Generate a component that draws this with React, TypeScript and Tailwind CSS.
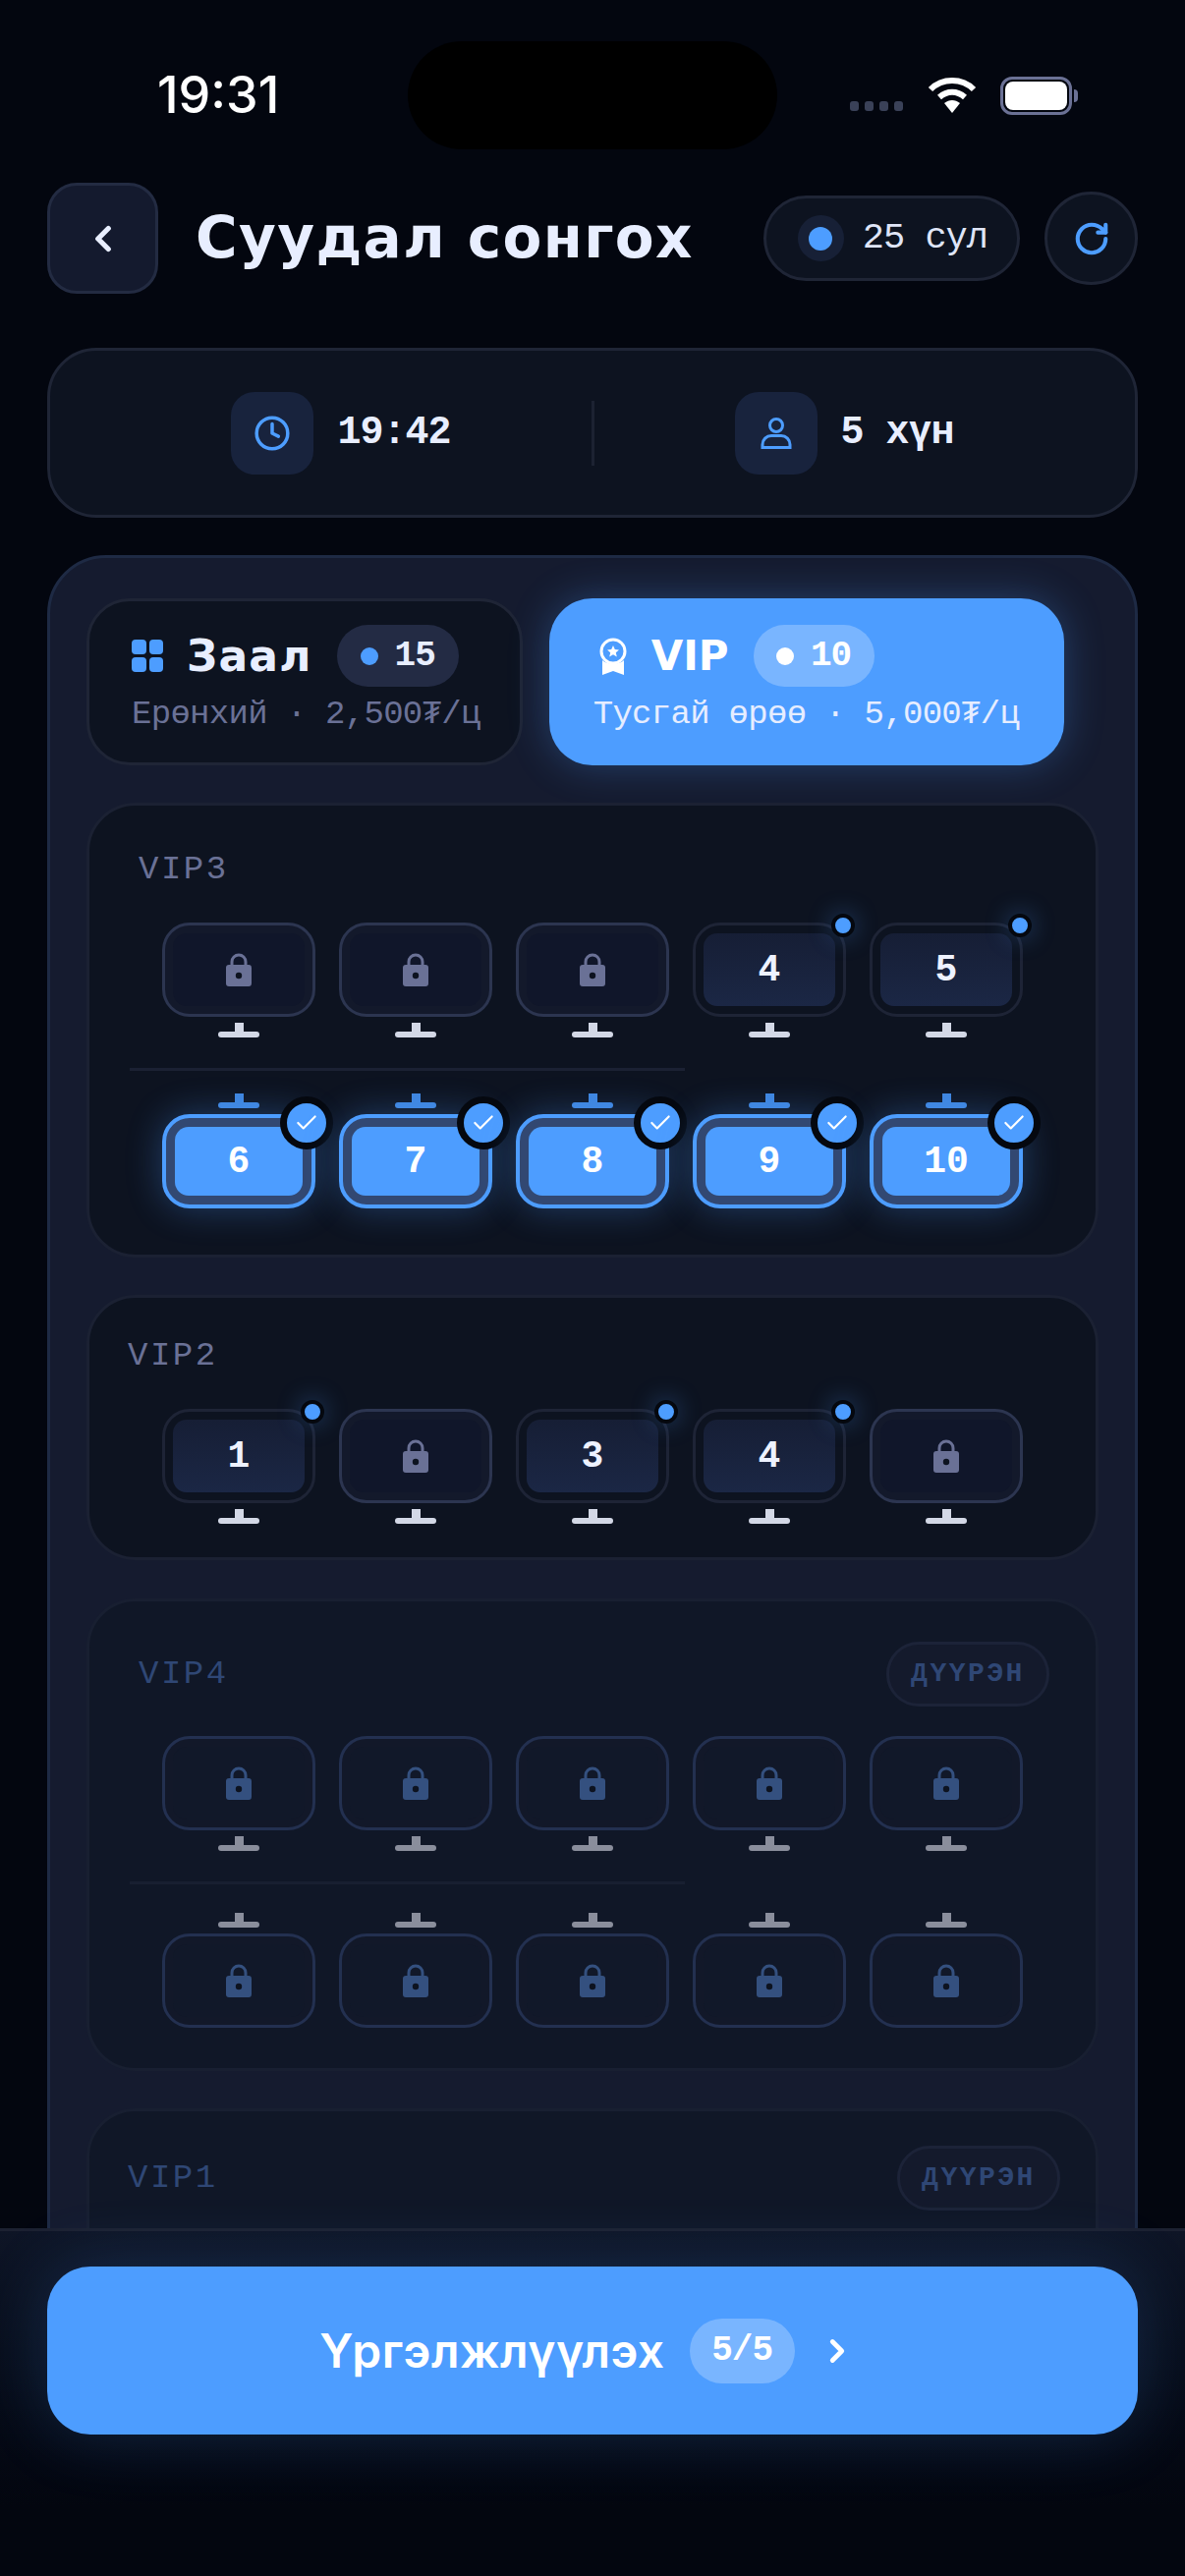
import { Check, ChevronLeft, ChevronRight, Clock, RotateCw } from 'lucide-react'

type SeatState = 'locked' | 'free' | 'selected'
type SeatData = { n: number; state: SeatState }

const mono = "font-['Liberation_Mono',monospace]"
const wide = "font-['DejaVu_Sans',sans-serif]"

const locked = (count: number): SeatData[] =>
  Array.from({ length: count }, (_, i) => ({ n: i + 1, state: 'locked' as SeatState }))

function LockIcon({ color }: { color: string }) {
  return (
    <svg width="26" height="34" viewBox="0 0 26 34" fill="none">
      <path d="M6 15V9a7 7 0 0 1 14 0v6" stroke={color} strokeWidth="3" />
      <rect x="0" y="12" width="26" height="22" rx="3" fill={color} />
      <circle cx="13" cy="23" r="3.2" fill="#0d1320" />
    </svg>
  )
}

function Stand({ up, selected, dim }: { up?: boolean; selected?: boolean; dim?: boolean }) {
  const color = selected ? 'bg-[#3f86df]' : dim ? 'bg-[#8a8e9c]' : 'bg-[#d3d8e6]'
  return (
    <div className={`flex flex-col items-center ${up ? 'mb-[6px]' : 'mt-[6px]'}`}>
      <div className={`w-[9px] h-[9px] ${color}`} />
      <div className={`w-[42px] h-[6px] rounded-full ${color}`} />
    </div>
  )
}

function Seat({ seat, up, dim }: { seat: SeatData; up?: boolean; dim?: boolean }) {
  const { n, state } = seat
  const shell =
    state === 'selected'
      ? 'border-[4px] border-[#4d9dff] bg-[#324872] p-[9px] shadow-[0_0_36px_rgba(77,157,255,0.32)]'
      : state === 'free'
        ? 'border-[3px] border-[#1e2436] p-[8px]'
        : dim
          ? 'border-[3px] border-[#233050] bg-[#121829] p-[8px]'
          : 'border-[3px] border-[#2c3550] bg-[#13192b] p-[8px]'
  const inner =
    state === 'selected'
      ? 'bg-[#4d9dff] text-white'
      : state === 'free'
        ? 'bg-gradient-to-b from-[#161e35] to-[#1b2745] text-[#eef2ff]'
        : dim
          ? 'bg-[#111829]'
          : 'bg-[#10162a]'

  return (
    <div className="w-[156px] flex flex-col">
      {up && <Stand up selected={state === 'selected'} dim={dim} />}
      <div className={`relative h-[96px] rounded-[28px] ${shell}`}>
        <div className={`h-full rounded-[14px] flex items-center justify-center ${inner}`}>
          {state === 'locked' ? (
            <LockIcon color={dim ? '#34507f' : '#6a7196'} />
          ) : (
            <span className={`${mono} text-[38px] font-bold`}>{n}</span>
          )}
        </div>
        {state === 'selected' && (
          <div className="absolute -top-[22px] -right-[22px] w-[54px] h-[54px] rounded-full bg-[#4d9dff] border-[7px] border-[#05080f] flex items-center justify-center">
            <Check size={26} strokeWidth={2} color="#ffffff" />
          </div>
        )}
        {state === 'free' && (
          <div className="absolute -top-[12px] -right-[12px] w-[24px] h-[24px] rounded-full bg-[#4d9dff] border-[4px] border-[#05080f] shadow-[0_0_24px_rgba(77,157,255,0.35)]" />
        )}
      </div>
      {!up && <Stand dim={dim} />}
    </div>
  )
}

function SeatRow({ seats, up, dim }: { seats: SeatData[]; up?: boolean; dim?: boolean }) {
  return (
    <div className="flex justify-center gap-[24px]">
      {seats.map((s) => (
        <Seat key={s.n} seat={s} up={up} dim={dim} />
      ))}
    </div>
  )
}

function FullBadge() {
  return (
    <div
      className={`h-[66px] w-[166px] rounded-full border-[3px] border-[#1c2338] bg-[#141a2c] flex items-center justify-center ${mono} text-[28px] font-bold tracking-[2.5px] text-[#2f4775]`}
    >
      ДҮҮРЭН
    </div>
  )
}

export default function App() {
  return (
    <div className="w-[1206px] h-[2622px] overflow-hidden flex flex-col bg-[#03060f] font-['Inter',sans-serif] text-[#e8eeff]">
      {/* status bar */}
      <div className="flex items-center h-[110px] mt-[42px] pl-[160px] shrink-0">
        <span className="w-[255px] text-[52px] font-medium text-white">19:31</span>
        <div className="w-[376px] h-[110px] rounded-full bg-black" />
        <div className="ml-[74px] flex items-center">
          <div className="flex gap-[6px] mt-[22px]">
            <div className="w-[9px] h-[10px] rounded-[3px] bg-[#3a4158]" />
            <div className="w-[9px] h-[10px] rounded-[3px] bg-[#3a4158]" />
            <div className="w-[9px] h-[10px] rounded-[3px] bg-[#3a4158]" />
            <div className="w-[9px] h-[10px] rounded-[3px] bg-[#3a4158]" />
          </div>
          <svg className="ml-[25px]" width="50" height="38" viewBox="0 0 50 38" fill="none">
            <path d="M3 13C15 1 35 1 47 13" stroke="#fff" strokeWidth="6" />
            <path d="M12 21c8-7 18-7 26 0" stroke="#fff" strokeWidth="6" />
            <path d="M17 27c5-4 11-4 16 0l-8 10z" fill="#fff" />
          </svg>
          <div className="ml-[24px] w-[73px] h-[39px] rounded-[12px] border-[3px] border-[#6b7195] p-[2px] relative">
            <div className="h-full rounded-[8px] bg-white" />
            <div className="absolute -right-[9px] top-[10px] w-[4px] h-[13px] rounded-r-full bg-[#6b7195]" />
          </div>
        </div>
      </div>

      {/* header */}
      <div className="flex items-center h-[113px] mt-[34px] px-[48px] shrink-0">
        <button className="w-[113px] h-[113px] rounded-[30px] bg-[#141a2e] border-[3px] border-[#232b42] flex items-center justify-center">
          <ChevronLeft size={42} strokeWidth={3} color="#e8eeff" />
        </button>
        <h1 className={`ml-[38px] ${wide} text-[58px] font-bold tracking-[1.4px]`}>Суудал сонгох</h1>
        <div className="ml-auto flex items-center gap-[25px]">
          <div className="h-[87px] rounded-full bg-[#0d1320] border-[3px] border-[#1f2536] pl-[32px] pr-[30px] flex items-center gap-[19px]">
            <div className="w-[47px] h-[47px] rounded-full bg-[#172036] flex items-center justify-center">
              <div className="w-[24px] h-[24px] rounded-full bg-[#4d9dff]" />
            </div>
            <span className={`${mono} text-[37px] tracking-[-1px] text-[#dfe5f7]`}>25 сул</span>
          </div>
          <button className="w-[95px] h-[95px] rounded-full bg-[#0d1320] border-[3px] border-[#1f2536] flex items-center justify-center">
            <RotateCw size={38} strokeWidth={2.6} color="#4d9dff" />
          </button>
        </div>
      </div>

      {/* time and people */}
      <div className="mt-[55px] mx-[48px] h-[173px] rounded-[50px] bg-[#0d1320] border-[3px] border-[#1f2536] flex items-center justify-center gap-[143px] shrink-0">
        <div className="flex items-center gap-[24px]">
          <div className="w-[84px] h-[84px] rounded-[24px] bg-[#18233d] flex items-center justify-center">
            <Clock size={38} strokeWidth={2.2} color="#4d9dff" />
          </div>
          <span className={`${mono} text-[40px] tracking-[-1px] font-bold`}>19:42</span>
        </div>
        <div className="w-[3px] h-[66px] bg-[#1c2232]" />
        <div className="flex items-center gap-[24px]">
          <div className="w-[84px] h-[84px] rounded-[24px] bg-[#18233d] flex items-center justify-center">
            <svg width="32" height="34" viewBox="0 0 32 34" fill="none" stroke="#4d9dff" strokeWidth="3">
              <circle cx="16" cy="9" r="6.5" />
              <path d="M2 31.5v-3a9 9 0 0 1 9-9h10a9 9 0 0 1 9 9v3z" />
            </svg>
          </div>
          <span className={`${mono} text-[40px] tracking-[-1px] font-bold`}>5 хүн</span>
        </div>
      </div>

      {/* seat map */}
      <div className="flex-1 min-h-0 overflow-hidden mt-[38px] px-[48px]">
        <div className="rounded-t-[60px] bg-[#151b2f] border-[3px] border-[#1e2a44] pt-[41px] px-[37px] pb-[60px] flex flex-col gap-[38px]">
          {/* tabs */}
          <div className="flex gap-[27px]">
            <div className="h-[170px] rounded-[44px] bg-[#0d1320] border-[3px] border-[#1f2536] pl-[43px] pr-[40px] pt-[24px]">
              <div className="flex items-center h-[63px]">
                <div className="grid grid-cols-2 gap-[3px] w-[32px]">
                  <div className="h-[15px] rounded-[4px] bg-[#4d9dff]" />
                  <div className="h-[15px] rounded-[4px] bg-[#4d9dff]" />
                  <div className="h-[15px] rounded-[4px] bg-[#4d9dff]" />
                  <div className="h-[15px] rounded-[4px] bg-[#4d9dff]" />
                </div>
                <span className={`ml-[24px] ${wide} text-[44px] font-bold tracking-[1.2px]`}>Заал</span>
                <div className="ml-[25px] h-[63px] w-[124px] rounded-full bg-[#232b44] flex items-center justify-center gap-[17px]">
                  <div className="w-[18px] h-[18px] rounded-full bg-[#4d9dff]" />
                  <span className={`${mono} text-[36px] tracking-[-1px] font-bold`}>15</span>
                </div>
              </div>
              <div className={`${mono} text-[34px] tracking-[-0.7px] leading-[40px] mt-[8px] text-[#6a7196] whitespace-nowrap`}>Ерөнхий · 2,500₮/ц</div>
            </div>
            <div className="h-[170px] rounded-[44px] bg-[#4d9dff] pl-[45px] pr-[46px] pt-[27px] shadow-[0_0_40px_rgba(77,157,255,0.3)]">
              <div className="flex items-center h-[63px]">
                <svg className="ml-[6px]" width="28" height="38" viewBox="0 0 28 38" fill="none">
                  <circle cx="14" cy="14" r="12" stroke="#fff" strokeWidth="3" />
                  <path d="M14 8l1.8 4 4.2.4-3.2 2.8 1 4.2-3.8-2.2-3.8 2.2 1-4.2L8 12.4l4.2-.4z" fill="#fff" />
                  <path d="M3 23c5 5 17 5 22 0v15l-11-4-11 4z" fill="#fff" />
                </svg>
                <span className={`ml-[25px] ${wide} text-[42px] font-bold text-white`}>VIP</span>
                <div className="ml-[25px] h-[63px] w-[123px] rounded-full bg-white/25 flex items-center justify-center gap-[17px]">
                  <div className="w-[18px] h-[18px] rounded-full bg-white" />
                  <span className={`${mono} text-[36px] tracking-[-1px] font-bold text-white`}>10</span>
                </div>
              </div>
              <div className={`${mono} text-[34px] tracking-[-0.7px] leading-[40px] mt-[8px] text-[#e6edff] whitespace-nowrap`}>Тусгай өрөө · 5,000₮/ц</div>
            </div>
          </div>

          {/* VIP3 */}
          <section className="rounded-[50px] bg-[#0d1320] border-[3px] border-[#1b2133] pt-[45px] pb-[47px]">
            <div className={`${mono} pl-[50px] text-[34px] leading-[40px] tracking-[2.5px] text-[#6a7196] mb-[34px]`}>VIP3</div>
            <SeatRow
              seats={[
                { n: 1, state: 'locked' },
                { n: 2, state: 'locked' },
                { n: 3, state: 'locked' },
                { n: 4, state: 'free' },
                { n: 5, state: 'free' },
              ]}
            />
            <div className="ml-[41px] w-[565px] h-[3px] mt-[31px] mb-[23px] bg-[#1b2133]" />
            <SeatRow
              up
              seats={[6, 7, 8, 9, 10].map((n) => ({ n, state: 'selected' as SeatState }))}
            />
          </section>

          {/* VIP2 */}
          <section className="rounded-[50px] bg-[#0d1320] border-[3px] border-[#1b2133] pt-[39px] pb-[34px]">
            <div className={`${mono} pl-[39px] text-[34px] leading-[40px] tracking-[2.5px] text-[#6a7196] mb-[34px]`}>VIP2</div>
            <SeatRow
              seats={[
                { n: 1, state: 'free' },
                { n: 2, state: 'locked' },
                { n: 3, state: 'free' },
                { n: 4, state: 'free' },
                { n: 5, state: 'locked' },
              ]}
            />
          </section>

          {/* VIP4, full */}
          <section className="mt-[1px] rounded-[50px] bg-[#101727] border-[3px] border-[#181f31] pt-[41px] pb-[41px]">
            <div className="flex items-center justify-between pl-[50px] pr-[47px] mb-[30px]">
              <span className={`${mono} text-[34px] leading-[40px] tracking-[2.5px] text-[#2f4775]`}>VIP4</span>
              <FullBadge />
            </div>
            <SeatRow dim seats={locked(5)} />
            <div className="ml-[41px] w-[565px] h-[3px] mt-[31px] mb-[29px] bg-[#181f31]" />
            <SeatRow up dim seats={locked(5)} />
          </section>

          {/* VIP1, full */}
          <section className="rounded-[50px] bg-[#101727] border-[3px] border-[#181f31] pt-[35px] pb-[41px]">
            <div className="flex items-center justify-between pl-[39px] pr-[36px] mb-[30px]">
              <span className={`${mono} text-[34px] leading-[40px] tracking-[2.5px] text-[#2f4775]`}>VIP1</span>
              <FullBadge />
            </div>
            <SeatRow dim seats={locked(5)} />
          </section>
        </div>
      </div>

      {/* footer */}
      <div className="h-[354px] shrink-0 border-t-[3px] border-[#1c2131] bg-gradient-to-b from-[#0e1526] to-[#03060f] to-80% px-[48px] pt-[36px]">
        <button className="w-full h-[171px] rounded-[44px] bg-[#4d9dff] flex items-center justify-center pr-[10px] shadow-[0_0_70px_rgba(77,157,255,0.2)]">
          <span className="text-[48px] tracking-[0.5px] font-semibold text-white">Үргэлжлүүлэх</span>
          <span className={`ml-[25px] w-[107px] h-[66px] rounded-full bg-white/25 flex items-center justify-center ${mono} text-[36px] tracking-[-1px] font-bold text-white`}>5/5</span>
          <ChevronRight className="ml-[24px]" size={38} strokeWidth={3} color="#ffffff" />
        </button>
      </div>
    </div>
  )
}
